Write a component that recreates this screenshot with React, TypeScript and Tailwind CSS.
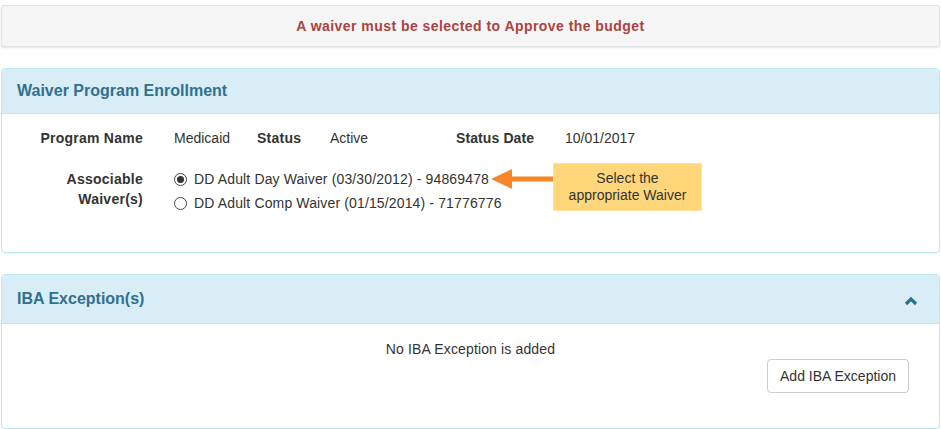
import React from 'react'

function Radio({ checked }: { checked?: boolean }) {
  return (
    <span className="w-[13px] h-[13px] rounded-full border border-[#444] bg-white flex items-center justify-center shrink-0">
      {checked && <span className="w-[7px] h-[7px] rounded-full bg-[#333]" />}
    </span>
  )
}

export default function App() {
  return (
    <div
      className="w-[941px] h-[429px] bg-white pt-[5px] pl-[1px] pr-[1px] text-[14px] text-[#333] overflow-hidden"
      style={{ fontFamily: '"Liberation Sans", Arial, sans-serif' }}
    >
      {/* Warning */}
      <div className="h-[42px] flex items-center justify-center bg-[#f5f5f5] border border-[#e3e3e3] rounded-[3px] shadow-[0_1px_2px_rgba(0,0,0,0.12)]">
        <span className="font-bold text-[#a94442] tracking-[0.45px]">A waiver must be selected to Approve the budget</span>
      </div>

      {/* Waiver Program Enrollment */}
      <div className="mt-[21px] h-[185px] border border-[#bce8f1] rounded-[4px] shadow-[0_1px_1px_rgba(0,0,0,0.05)] overflow-hidden">
        <div className="h-[45px] bg-[#d9edf7] border-b border-[#bce8f1] px-[15px] flex items-center">
          <h3 className="text-[16px] font-bold text-[#31708f]">Waiver Program Enrollment</h3>
        </div>
        <div className="relative">
          <div className="flex items-center pt-[14px] h-[34px] leading-[20px]">
            <div className="w-[141px] text-right font-bold tracking-[0.25px]">Program Name</div>
            <div className="w-[83px] ml-[31px]">Medicaid</div>
            <div className="w-[73px] font-bold tracking-[0.25px]">Status</div>
            <div className="w-[126px]">Active</div>
            <div className="w-[109px] font-bold tracking-[0.1px]">Status Date</div>
            <div>10/01/2017</div>
          </div>
          <div className="flex mt-[21px]">
            <div className="w-[141px] text-right font-bold leading-[20px] tracking-[0.25px]">
              Associable
              <br />
              Waiver(s)
            </div>
            <div className="ml-[31px] flex flex-col gap-[4px] tracking-[0.14px]">
              <label className="flex items-center gap-[7px] h-[20px]">
                <Radio checked />
                <span>DD Adult Day Waiver (03/30/2012) - 94869478</span>
              </label>
              <label className="flex items-center gap-[7px] h-[20px]">
                <Radio />
                <span>DD Adult Comp Waiver (01/15/2014) - 71776776</span>
              </label>
            </div>
          </div>

          {/* Annotation */}
          <svg className="absolute left-[488px] top-[54px]" width="66" height="22" viewBox="0 0 66 22">
            <polygon points="1,11 22,1 22,21" fill="#f5862a" />
            <rect x="20" y="8.5" width="46" height="5" fill="#f5862a" />
          </svg>
          <div className="absolute left-[551px] top-[49px] w-[149px] h-[48px] bg-[#ffd77a] border border-[#ffe39c] flex flex-col items-center justify-center leading-[17px] text-[#333]">
            <span>Select the</span>
            <span>appropriate Waiver</span>
          </div>
        </div>
      </div>

      {/* IBA Exception(s) */}
      <div className="mt-[21px] h-[155px] border border-[#bce8f1] rounded-[4px] shadow-[0_1px_1px_rgba(0,0,0,0.05)] overflow-hidden">
        <div className="h-[49px] bg-[#d9edf7] border-b border-[#bce8f1] pl-[15px] pr-[21px] flex items-center justify-between">
          <h3 className="text-[16px] font-bold text-[#31708f]">IBA Exception(s)</h3>
          <svg width="14" height="10" viewBox="0 0 14 10" className="mt-[3px]">
            <polyline points="2,8 7,3 12,8" fill="none" stroke="#31708f" strokeWidth="3.2" />
          </svg>
        </div>
        <div className="pt-[15px]">
          <p className="text-center leading-[20px] tracking-[0.14px]">No IBA Exception is added</p>
          <div className="flex justify-end pr-[30px]">
            <button className="h-[34px] px-[12px] border border-[#ccc] rounded-[4px] bg-white text-[#333]">
              Add IBA Exception
            </button>
          </div>
        </div>
      </div>
    </div>
  )
}
